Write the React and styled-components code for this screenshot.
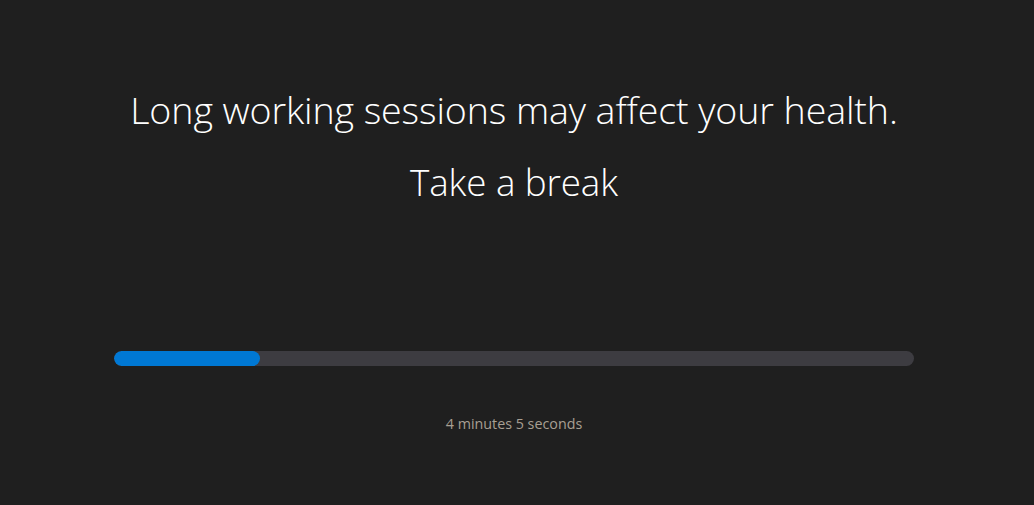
import React from "react";
import styled, { createGlobalStyle } from "styled-components";

const Global = createGlobalStyle`
  html, body { margin: 0; padding: 0; background: #1f1f1f; }
  body { font-family: "Open Sans", "Noto Sans", sans-serif; }
`;

const Page = styled.div`
  width: 1034px;
  height: 505px;
  background: #1f1f1f;
  display: flex;
  flex-direction: column;
  align-items: center;
  box-sizing: border-box;
  padding: 84px 6px 0 0;
`;

const Headline = styled.h1`
  margin: 0;
  font-weight: 300;
  font-size: 37.6px;
  line-height: 52px;
  color: #ffffff;
  text-align: center;
  letter-spacing: -0.1px;
  white-space: nowrap;
`;

const Sub = styled(Headline)`
  margin-top: 20px;
  font-size: 36.8px;
`;

const Track = styled.div`
  margin-top: 143px;
  width: 800px;
  height: 15px;
  border-radius: 8px;
  background: #3d3c41;
  overflow: hidden;
  display: flex;
`;

const Fill = styled.div`
  height: 100%;
  border-radius: 8px;
  background: #0078d4;
`;

const Timer = styled.div`
  margin-top: 48px;
  font-size: 14.3px;
  color: #a89f93;
  font-weight: 400;
`;

export default function App() {
  const progress = 0.183;
  return (
    <>
      <Global />
      <Page>
        <Headline>Long working sessions may affect your health.</Headline>
        <Sub>Take a break</Sub>
        <Track>
          <Fill style={{ width: `${progress * 100}%` }} />
        </Track>
        <Timer>4 minutes 5 seconds</Timer>
      </Page>
    </>
  );
}
